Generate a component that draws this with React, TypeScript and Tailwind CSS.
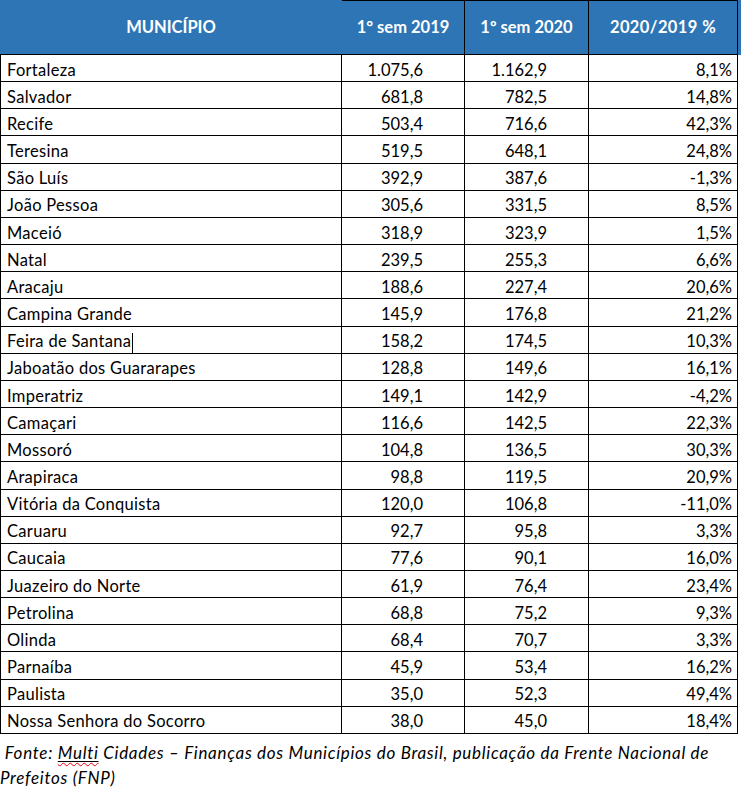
const ROWS: [string, string, string, string][] = [
  ["Fortaleza", "1.075,6", "1.162,9", "8,1%"],
  ["Salvador", "681,8", "782,5", "14,8%"],
  ["Recife", "503,4", "716,6", "42,3%"],
  ["Teresina", "519,5", "648,1", "24,8%"],
  ["São Luís", "392,9", "387,6", "-1,3%"],
  ["João Pessoa", "305,6", "331,5", "8,5%"],
  ["Maceió", "318,9", "323,9", "1,5%"],
  ["Natal", "239,5", "255,3", "6,6%"],
  ["Aracaju", "188,6", "227,4", "20,6%"],
  ["Campina Grande", "145,9", "176,8", "21,2%"],
  ["Feira de Santana", "158,2", "174,5", "10,3%"],
  ["Jaboatão dos Guararapes", "128,8", "149,6", "16,1%"],
  ["Imperatriz", "149,1", "142,9", "-4,2%"],
  ["Camaçari", "116,6", "142,5", "22,3%"],
  ["Mossoró", "104,8", "136,5", "30,3%"],
  ["Arapiraca", "98,8", "119,5", "20,9%"],
  ["Vitória da Conquista", "120,0", "106,8", "-11,0%"],
  ["Caruaru", "92,7", "95,8", "3,3%"],
  ["Caucaia", "77,6", "90,1", "16,0%"],
  ["Juazeiro do Norte", "61,9", "76,4", "23,4%"],
  ["Petrolina", "68,8", "75,2", "9,3%"],
  ["Olinda", "68,4", "70,7", "3,3%"],
  ["Parnaíba", "45,9", "53,4", "16,2%"],
  ["Paulista", "35,0", "52,3", "49,4%"],
  ["Nossa Senhora do Socorro", "38,0", "45,0", "18,4%"],
];

const COLS = "grid grid-cols-[342px_123px_124px_149px]";

export default function App() {
  return (
    <div className="h-[792px] w-[741px] bg-white text-black [font-family:Lato,'Liberation_Sans',sans-serif]">
      <div className={`${COLS} h-[55px] bg-[#2e75b6] text-[16.5px] font-bold text-white`}>
        <div className="flex items-center justify-center border-b border-black pt-px">MUNICÍPIO</div>
        <div className="flex items-center justify-center border-r border-b border-t border-black">1° sem 2019</div>
        <div className="flex items-center justify-center border-r border-b border-t border-black">1º sem 2020</div>
        <div className="flex items-center justify-center border-r border-b border-t border-black tracking-[0.4px]">2020/2019 %</div>
      </div>
      {ROWS.map(([name, a, b, pct]) => (
        <div key={name} className={`${COLS} h-[27.16px] text-[16.5px] leading-none`}>
          <div className="flex items-end border-x border-b border-black pb-[3px] pl-[6px] tracking-[0.3px]">
            {name}
            {/* caret left in the source screenshot */}
            {name === "Feira de Santana" && (
              <span className="mb-[-3px] ml-px inline-block h-[20px] w-px bg-black" />
            )}
          </div>
          <div className="flex items-end justify-end border-r border-b border-black pb-[3px] pr-[41px]">{a}</div>
          <div className="flex items-end justify-end border-r border-b border-black pb-[3px] pr-[41px]">{b}</div>
          <div className="flex items-end justify-end border-r border-b border-black pb-[3px] pr-[5px]">{pct}</div>
        </div>
      ))}
      <div className="whitespace-nowrap pt-[6px] text-[17px] leading-[25px] tracking-[0.7px] italic">
        <p>
          &nbsp;Fonte:{" "}
          <span className="underline decoration-black underline-offset-2">
            <span className="underline decoration-red-600 decoration-wavy decoration-1 underline-offset-[3px]">Multi</span>
          </span>{" "}
          Cidades – Finanças dos Municípios do Brasil, publicação da Frente Nacional de
        </p>
        <p>Prefeitos (FNP)</p>
      </div>
    </div>
  );
}
